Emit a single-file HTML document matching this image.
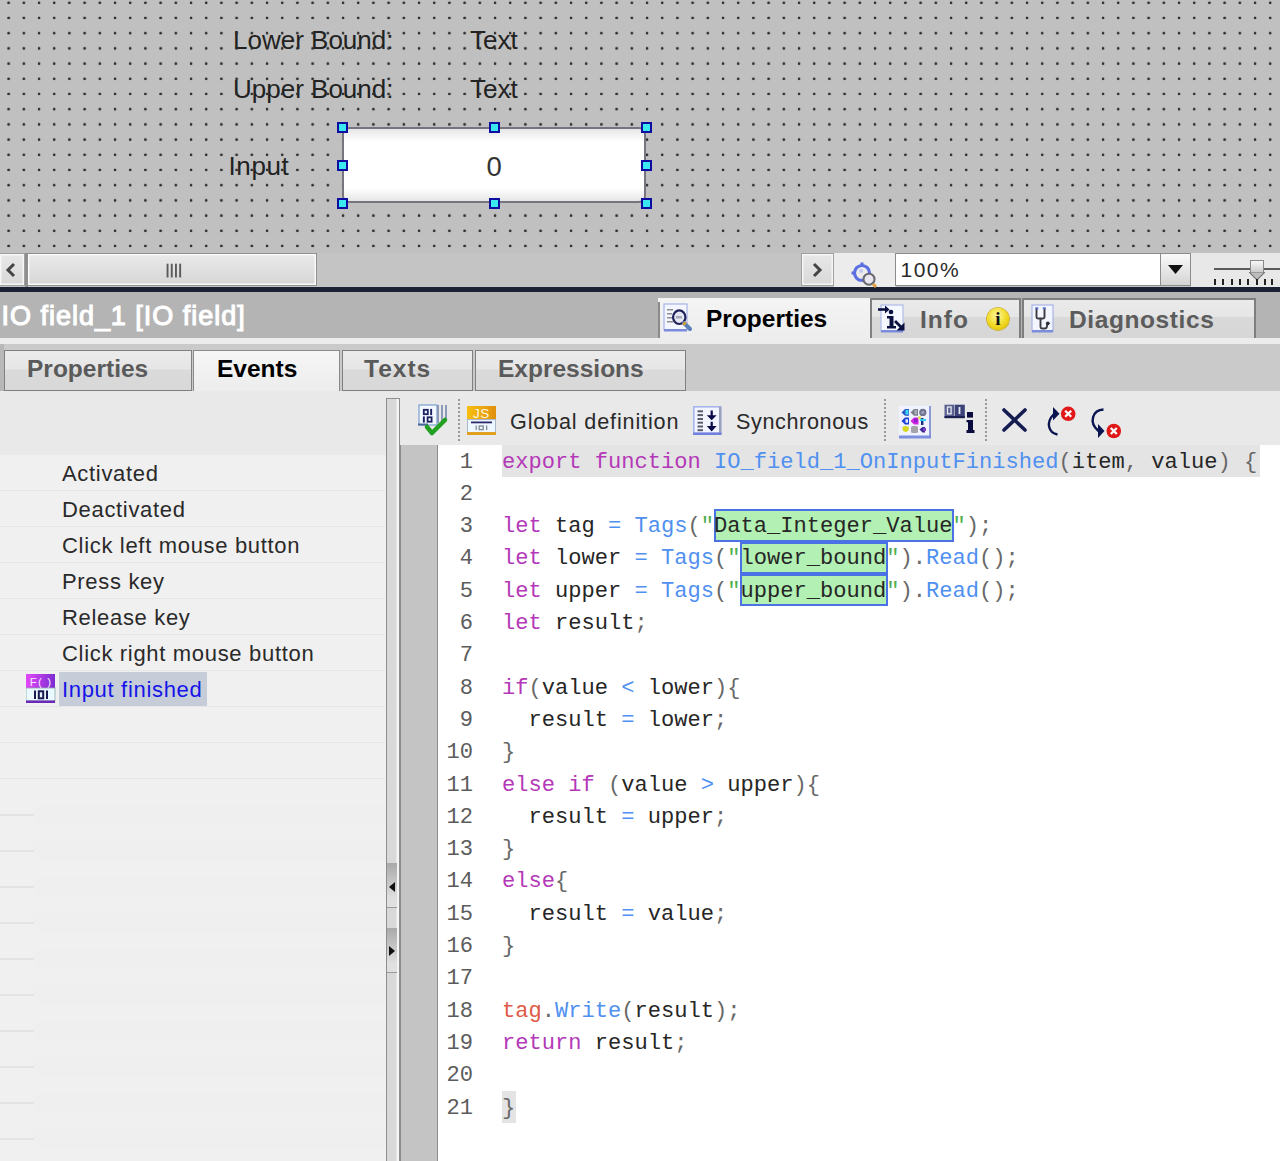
<!DOCTYPE html>
<html><head><meta charset="utf-8">
<style>
*{margin:0;padding:0;box-sizing:border-box}
html,body{width:1280px;height:1161px;overflow:hidden;background:#efefef;font-family:"Liberation Sans",sans-serif}
.a{position:absolute}
#canvas{left:0;top:0;width:1280px;height:253px;background-color:#c0c0c0;
}
.lbl{font-size:26px;color:#222;white-space:nowrap;line-height:1}
#dots2{left:0;top:0;width:1280px;height:253px;
}
.tb{font-size:24.5px;font-weight:bold;line-height:30px;white-space:nowrap}
.ev{font-size:22px;letter-spacing:0.68px;line-height:31px;color:#2a2a2a;white-space:nowrap}
.ln{left:439px;width:34px;text-align:right;font-family:"Liberation Mono",monospace;font-size:22.08px;line-height:32px;color:#5c5c5c}
.cl{left:502px;font-family:"Liberation Mono",monospace;font-size:22.08px;line-height:32px;color:#111;white-space:pre}
.k{color:#b438b8}.b{color:#5090f0}.p{color:#686868}.i{color:#262626}.g{color:#50b050}.r{color:#e05a48}
.hd{width:11px;height:11px;background:#3ae8f0;border:2px solid #0c0ca0}
.tt{font-size:21.6px;line-height:28px;color:#2a2a2a;white-space:nowrap}
</style></head><body>
<div id="canvas" class="a"><svg width="1280" height="253" style="position:absolute;left:0;top:0"><defs><pattern id="dp1" x="0" y="0" width="15.2" height="15.2" patternUnits="userSpaceOnUse"><rect x="7.55" y="1.75" width="2.1" height="2.1" fill="#303030"/></pattern></defs><rect width="1280" height="253" fill="url(#dp1)"/></svg></div>
<div class="a lbl" style="left:233px;top:27px">Lower Bound:</div>
<div class="a lbl" style="left:470px;top:27px">Text</div>
<div class="a lbl" style="left:233px;top:76px">Upper Bound:</div>
<div class="a lbl" style="left:470px;top:76px">Text</div>
<div class="a lbl" style="left:228.5px;top:152.5px;letter-spacing:0.6px">Input</div>
<div id="dots2" class="a"><svg width="1280" height="253" style="position:absolute;left:0;top:0"><defs><pattern id="dp2" x="0" y="0" width="15.2" height="15.2" patternUnits="userSpaceOnUse"><rect x="7.55" y="1.75" width="2.1" height="2.1" fill="#303030"/></pattern></defs><rect width="1280" height="253" fill="url(#dp2)"/></svg></div>
<!-- IO field -->
<div class="a" style="left:341.8px;top:126.9px;width:304.2px;height:76.2px;border:2.2px solid #77737f;border-radius:7px;background:linear-gradient(#e6e6e6,#fff 18%,#fff 82%,#e6e6e6)"></div>
<div class="a lbl" style="left:486.5px;top:152.5px;color:#333;font-size:27.5px">0</div>

<!-- scrollbar row -->
<div class="a" style="left:0;top:253px;width:1280px;height:34px;background:#c4c4c4"></div>
<div class="a" style="left:0;top:253px;width:25px;height:33px;background:linear-gradient(#e8e8e8,#d8d8d8);border:1px solid #a0a0a0;border-left:none;box-shadow:inset 0 0 0 1.5px #f6f6f6"></div>
<svg class="a" style="left:5px;top:262px" width="12" height="16" viewBox="0 0 12 16"><path d="M9 2 L3 8 L9 14" fill="none" stroke="#444" stroke-width="3"/></svg>
<div class="a" style="left:24.5px;top:252.5px;width:3px;height:34px;background:#8e8e8e"></div>
<div class="a" style="left:27px;top:253px;width:290px;height:33px;background:linear-gradient(#eaeaea,#d6d6d6);border:1px solid #909090;box-shadow:inset 0 0 0 1.5px #fafafa"></div>
<svg class="a" style="left:166px;top:263px" width="17" height="15" viewBox="0 0 17 15"><g fill="#5a5a5a"><rect x="0.6" y="0.7" width="1.9" height="13.8"/><rect x="4.8" y="0.7" width="1.9" height="13.8"/><rect x="9" y="0.7" width="1.9" height="13.8"/><rect x="13.2" y="0.7" width="1.9" height="13.8"/></g></svg>
<div class="a" style="left:801px;top:253px;width:33px;height:33px;background:linear-gradient(#e8e8e8,#d8d8d8);border:1px solid #a0a0a0;box-shadow:inset 0 0 0 1.5px #f6f6f6"></div>
<svg class="a" style="left:811px;top:262px" width="12" height="16" viewBox="0 0 12 16"><path d="M3 2 L9 8 L3 14" fill="none" stroke="#444" stroke-width="3"/></svg>
<div class="a" style="left:834px;top:253px;width:62px;height:34px;background:#ececec"></div>
<div class="a" style="left:895px;top:253px;width:265px;height:33px;background:#fff;border:1px solid #8c8c8c;border-right:none"></div>
<div class="a" style="left:900.5px;top:257.5px;font-size:21px;letter-spacing:1.5px;color:#2a2a2a;line-height:24px">100%</div>
<div class="a" style="left:1160px;top:253px;width:31px;height:33px;background:linear-gradient(#fafafa,#d4d4d4);border:1px solid #8c8c8c"></div>
<svg class="a" style="left:1168px;top:265px" width="15" height="9" viewBox="0 0 15 9"><path d="M0 0 H15 L7.5 9Z" fill="#111"/></svg>
<div class="a" style="left:1191px;top:253px;width:89px;height:34px;background:#e8e8e8"></div>
<!-- dark line -->
<div class="a" style="left:0;top:287px;width:1280px;height:5px;background:#1c2133"></div>
<!-- title bar -->
<div class="a" style="left:0;top:292px;width:1280px;height:46px;background:#b4b4b4"></div>
<div class="a" style="left:1.5px;top:300px;font-size:27px;letter-spacing:0.98px;-webkit-text-stroke:1.1px #fff;color:#fff;line-height:32px;white-space:nowrap">IO field_1 [IO field]</div>
<!-- light strip and subtab row -->
<div class="a" style="left:0;top:338px;width:1280px;height:6px;background:#ececec"></div>
<div class="a" style="left:0;top:344px;width:1280px;height:47.5px;background:#cacaca;border-bottom:1.8px solid #7a7a7a"></div>

<!-- right tabs -->
<div class="a" style="left:658px;top:298px;width:212px;height:46px;background:linear-gradient(#f4f4f4,#ececec)"></div><div class="a" style="left:658px;top:302px;width:2px;height:36px;background:#8a8a8a"></div>
<div class="a tb" style="left:706px;top:304px;color:#000">Properties</div>
<div class="a" style="left:869.5px;top:298px;width:151px;height:40px;background:linear-gradient(#eaeaea 0,#e6e6e6 44%,#d9d9d9 46%,#d6d6d6 100%);border:2px solid #7e7e7e;border-left:2.5px solid #808080;border-bottom:none"></div>
<div class="a tb" style="left:920px;top:305px;color:#5c5c5c;letter-spacing:1px">Info</div>
<div class="a" style="left:1022px;top:298px;width:234px;height:40px;background:linear-gradient(#eaeaea 0,#e6e6e6 44%,#d9d9d9 46%,#d6d6d6 100%);border:2px solid #7e7e7e;border-bottom:none"></div>
<div class="a tb" style="left:1069px;top:305px;color:#5c5c5c;letter-spacing:0.6px">Diagnostics</div>
<!-- sub tabs -->
<div class="a" style="left:0;top:344px;width:4px;height:47px;background:#b8b8b8"></div>
<div class="a" style="left:4px;top:350px;width:188px;height:41px;background:linear-gradient(#ebebeb 0,#e6e6e6 45%,#dadada 50%,#d8d8d8 100%);border:1.6px solid #808080"></div>
<div class="a tb" style="left:27px;top:354px;color:#5a5a5a">Properties</div>
<div class="a" style="left:193px;top:350px;width:147px;height:42px;background:linear-gradient(#f6f6f6,#ececec);border:1.5px solid #8a8a8a;border-bottom:none"></div>
<div class="a tb" style="left:217px;top:354px;color:#000">Events</div>
<div class="a" style="left:342px;top:350px;width:131px;height:41px;background:linear-gradient(#ebebeb 0,#e6e6e6 45%,#dadada 50%,#d8d8d8 100%);border:1.6px solid #808080"></div>
<div class="a tb" style="left:364px;top:354px;color:#5a5a5a;letter-spacing:1px">Texts</div>
<div class="a" style="left:475px;top:350px;width:211px;height:41px;background:linear-gradient(#ebebeb 0,#e6e6e6 45%,#dadada 50%,#d8d8d8 100%);border:1.6px solid #808080"></div>
<div class="a tb" style="left:498px;top:354px;color:#5a5a5a">Expressions</div>

<!-- events list -->
<div class="a" style="left:0;top:391px;width:386px;height:64px;background:#e9e9e9"></div>
<div class="a" style="left:0;top:455px;width:386px;height:706px;background:#f0f0f0"></div>
<div class="a" style="left:0;top:490px;width:385px;height:1px;background:#e6e6e6"></div>
<div class="a" style="left:0;top:526px;width:385px;height:1px;background:#e6e6e6"></div>
<div class="a" style="left:0;top:562px;width:385px;height:1px;background:#e6e6e6"></div>
<div class="a" style="left:0;top:598px;width:385px;height:1px;background:#e6e6e6"></div>
<div class="a" style="left:0;top:634px;width:385px;height:1px;background:#e6e6e6"></div>
<div class="a" style="left:0;top:670px;width:385px;height:1px;background:#e6e6e6"></div>
<div class="a" style="left:0;top:706px;width:385px;height:1px;background:#e6e6e6"></div>
<div class="a" style="left:0;top:742px;width:385px;height:1px;background:#e6e6e6"></div>
<div class="a" style="left:0;top:778px;width:385px;height:1px;background:#e6e6e6"></div>
<div class="a" style="left:0;top:814px;width:34px;height:1.5px;background:#e3e3e3"></div><div class="a" style="left:34px;top:805px;width:351px;height:20px;background:#eeeeee;opacity:0.6"></div>
<div class="a" style="left:0;top:850px;width:34px;height:1.5px;background:#e3e3e3"></div><div class="a" style="left:34px;top:841px;width:351px;height:20px;background:#eeeeee;opacity:0.6"></div>
<div class="a" style="left:0;top:886px;width:34px;height:1.5px;background:#e3e3e3"></div><div class="a" style="left:34px;top:877px;width:351px;height:20px;background:#eeeeee;opacity:0.6"></div>
<div class="a" style="left:0;top:922px;width:34px;height:1.5px;background:#e3e3e3"></div><div class="a" style="left:34px;top:913px;width:351px;height:20px;background:#eeeeee;opacity:0.6"></div>
<div class="a" style="left:0;top:958px;width:34px;height:1.5px;background:#e3e3e3"></div><div class="a" style="left:34px;top:949px;width:351px;height:20px;background:#eeeeee;opacity:0.6"></div>
<div class="a" style="left:0;top:994px;width:34px;height:1.5px;background:#e3e3e3"></div><div class="a" style="left:34px;top:985px;width:351px;height:20px;background:#eeeeee;opacity:0.6"></div>
<div class="a" style="left:0;top:1030px;width:34px;height:1.5px;background:#e3e3e3"></div><div class="a" style="left:34px;top:1021px;width:351px;height:20px;background:#eeeeee;opacity:0.6"></div>
<div class="a" style="left:0;top:1066px;width:34px;height:1.5px;background:#e3e3e3"></div><div class="a" style="left:34px;top:1057px;width:351px;height:20px;background:#eeeeee;opacity:0.6"></div>
<div class="a" style="left:0;top:1102px;width:34px;height:1.5px;background:#e3e3e3"></div><div class="a" style="left:34px;top:1093px;width:351px;height:20px;background:#eeeeee;opacity:0.6"></div>
<div class="a" style="left:0;top:1138px;width:34px;height:1.5px;background:#e3e3e3"></div><div class="a" style="left:34px;top:1129px;width:351px;height:20px;background:#eeeeee;opacity:0.6"></div>
<div class="a" style="left:0;top:1174px;width:34px;height:1.5px;background:#e3e3e3"></div><div class="a" style="left:34px;top:1165px;width:351px;height:20px;background:#eeeeee;opacity:0.6"></div>
<div class="a ev" style="left:62px;top:458px">Activated</div>
<div class="a ev" style="left:62px;top:494px">Deactivated</div>
<div class="a ev" style="left:62px;top:530px">Click left mouse button</div>
<div class="a ev" style="left:62px;top:566px">Press key</div>
<div class="a ev" style="left:62px;top:602px">Release key</div>
<div class="a ev" style="left:62px;top:638px">Click right mouse button</div>
<div class="a" style="left:59px;top:672px;width:148px;height:34px;background:#c6cdd9"></div>
<div class="a ev" style="left:62px;top:674px;color:#1515e8">Input finished</div>

<div class="a" style="left:386px;top:391px;width:894px;height:54px;background:#e9e9e9"></div>
<!-- splitter -->
<div class="a" style="left:385.5px;top:397.5px;width:14.5px;height:764px;background:#d8d8d8;border:1.5px solid #8e8e8e;border-bottom:none;box-shadow:inset -2.5px 0 0 #f4f4f4"></div>
<div class="a" style="left:387px;top:863px;width:10px;height:45px;background:linear-gradient(#a8a8a8,#e0e0e0 80%);border-bottom:1.5px solid #9a9a9a"></div>
<svg class="a" style="left:389px;top:881.5px" width="6" height="10" viewBox="0 0 6 10"><path d="M6 0 V10 L0 5Z" fill="#111"/></svg>
<div class="a" style="left:387px;top:928px;width:10px;height:45px;background:linear-gradient(#a8a8a8,#e0e0e0 80%);border-bottom:1.5px solid #9a9a9a"></div>
<svg class="a" style="left:389px;top:946px" width="6" height="10" viewBox="0 0 6 10"><path d="M0 0 V10 L6 5Z" fill="#111"/></svg>
<!-- toolbar -->
<!-- code editor -->
<div class="a" style="left:400px;top:445px;width:38px;height:716px;background:#c4c4c4;border-left:1.5px solid #8c8c8c;border-right:1.5px solid #8c8c8c"></div>
<div class="a" style="left:438px;top:445px;width:842px;height:716px;background:#fff"></div>

<!-- code highlights -->
<div class="a" style="left:502px;top:445px;width:758px;height:32px;background:#e4e4e4"></div>
<div class="a" style="left:502px;top:1091px;width:13.5px;height:32px;background:#e4e4e4"></div>
<div class="a" style="left:713.5px;top:509px;width:240.5px;height:32.5px;background:#b3f0b3;border:2px solid #4a72e4"></div>
<div class="a" style="left:740px;top:541.5px;width:148px;height:32.5px;background:#b3f0b3;border:2px solid #4a72e4"></div>
<div class="a" style="left:740px;top:573.5px;width:148px;height:32.5px;background:#b3f0b3;border:2px solid #4a72e4"></div>
<div class="a ln" style="top:446.50px">1</div><div class="a cl" style="top:446.50px"><span class="k">export</span> <span class="k">function</span> <span class="b">IO_field_1_OnInputFinished</span><span class="p">(</span><span class="i">item</span><span class="p">, </span><span class="i">value</span><span class="p">) {</span></div>
<div class="a ln" style="top:478.80px">2</div><div class="a cl" style="top:478.80px"></div>
<div class="a ln" style="top:511.10px">3</div><div class="a cl" style="top:511.10px"><span class="k">let</span> <span class="i">tag</span> <span class="b">=</span> <span class="b">Tags</span><span class="p">(</span><span class="g">"</span><span class="i">Data_Integer_Value</span><span class="g">"</span><span class="p">);</span></div>
<div class="a ln" style="top:543.40px">4</div><div class="a cl" style="top:543.40px"><span class="k">let</span> <span class="i">lower</span> <span class="b">=</span> <span class="b">Tags</span><span class="p">(</span><span class="g">"</span><span class="i">lower_bound</span><span class="g">"</span><span class="p">).</span><span class="b">Read</span><span class="p">();</span></div>
<div class="a ln" style="top:575.70px">5</div><div class="a cl" style="top:575.70px"><span class="k">let</span> <span class="i">upper</span> <span class="b">=</span> <span class="b">Tags</span><span class="p">(</span><span class="g">"</span><span class="i">upper_bound</span><span class="g">"</span><span class="p">).</span><span class="b">Read</span><span class="p">();</span></div>
<div class="a ln" style="top:608.00px">6</div><div class="a cl" style="top:608.00px"><span class="k">let</span> <span class="i">result</span><span class="p">;</span></div>
<div class="a ln" style="top:640.30px">7</div><div class="a cl" style="top:640.30px"></div>
<div class="a ln" style="top:672.60px">8</div><div class="a cl" style="top:672.60px"><span class="k">if</span><span class="p">(</span><span class="i">value</span> <span class="b">&lt;</span> <span class="i">lower</span><span class="p">){</span></div>
<div class="a ln" style="top:704.90px">9</div><div class="a cl" style="top:704.90px">  <span class="i">result</span> <span class="b">=</span> <span class="i">lower</span><span class="p">;</span></div>
<div class="a ln" style="top:737.20px">10</div><div class="a cl" style="top:737.20px"><span class="p">}</span></div>
<div class="a ln" style="top:769.50px">11</div><div class="a cl" style="top:769.50px"><span class="k">else</span> <span class="k">if</span> <span class="p">(</span><span class="i">value</span> <span class="b">&gt;</span> <span class="i">upper</span><span class="p">){</span></div>
<div class="a ln" style="top:801.80px">12</div><div class="a cl" style="top:801.80px">  <span class="i">result</span> <span class="b">=</span> <span class="i">upper</span><span class="p">;</span></div>
<div class="a ln" style="top:834.10px">13</div><div class="a cl" style="top:834.10px"><span class="p">}</span></div>
<div class="a ln" style="top:866.40px">14</div><div class="a cl" style="top:866.40px"><span class="k">else</span><span class="p">{</span></div>
<div class="a ln" style="top:898.70px">15</div><div class="a cl" style="top:898.70px">  <span class="i">result</span> <span class="b">=</span> <span class="i">value</span><span class="p">;</span></div>
<div class="a ln" style="top:931.00px">16</div><div class="a cl" style="top:931.00px"><span class="p">}</span></div>
<div class="a ln" style="top:963.30px">17</div><div class="a cl" style="top:963.30px"></div>
<div class="a ln" style="top:995.60px">18</div><div class="a cl" style="top:995.60px"><span class="r">tag</span><span class="p">.</span><span class="b">Write</span><span class="p">(</span><span class="i">result</span><span class="p">);</span></div>
<div class="a ln" style="top:1027.90px">19</div><div class="a cl" style="top:1027.90px"><span class="k">return</span> <span class="i">result</span><span class="p">;</span></div>
<div class="a ln" style="top:1060.20px">20</div><div class="a cl" style="top:1060.20px"></div>
<div class="a ln" style="top:1092.50px">21</div><div class="a cl" style="top:1092.50px"><span class="p">}</span></div>

<!-- handles -->
<div class="a hd" style="left:336.5px;top:122.0px"></div><div class="a hd" style="left:336.5px;top:160.0px"></div><div class="a hd" style="left:336.5px;top:197.5px"></div><div class="a hd" style="left:488.5px;top:122.0px"></div><div class="a hd" style="left:488.5px;top:197.5px"></div><div class="a hd" style="left:640.5px;top:122.0px"></div><div class="a hd" style="left:640.5px;top:160.0px"></div><div class="a hd" style="left:640.5px;top:197.5px"></div>
<!-- toolbar contents -->
<svg class="a" style="left:417px;top:403px" width="32" height="34" viewBox="0 0 32 34">
 <rect x="2" y="2" width="18" height="20" fill="#f4f8ff" stroke="#7aa0d0" stroke-width="1.2"/>
 <rect x="20" y="2" width="2" height="18" fill="#8a9ab8"/><rect x="24" y="2" width="2" height="16" fill="#8a9ab8"/><rect x="28" y="2" width="2" height="14" fill="#8a9ab8"/>
 <rect x="1" y="20.5" width="10" height="2" fill="#4a6a9a"/>
 <rect x="6.8" y="6.8" width="4" height="4.4" fill="none" stroke="#1a2060" stroke-width="1.8"/><rect x="13.2" y="5.9" width="1.9" height="6.2" fill="#1a2060"/>
 <rect x="5.9" y="13.4" width="1.9" height="6.2" fill="#1a2060"/><rect x="10.6" y="14.3" width="4" height="4.4" fill="none" stroke="#1a2060" stroke-width="1.8"/>
 <path d="M10 24 L15 30 L28 17" fill="none" stroke="#22a022" stroke-width="4.5" stroke-linecap="round" stroke-linejoin="round"/>
</svg>
<div class="a" style="left:458px;top:399px;width:1.6px;height:44px;background:repeating-linear-gradient(#9a9a9a 0 2px,transparent 2px 4px)"></div>
<svg class="a" style="left:467px;top:406px" width="30" height="30" viewBox="0 0 30 30">
 <defs><linearGradient id="jg" x1="0" x2="1"><stop offset="0" stop-color="#f8c010"/><stop offset="1" stop-color="#e09010"/></linearGradient></defs>
 <rect x="0" y="0" width="29" height="13.5" fill="url(#jg)"/>
 <rect x="0.5" y="13.5" width="28" height="13" fill="#eef6ff" stroke="#a8b8c8" stroke-width="1"/>
 <rect x="0" y="26" width="29" height="3" fill="#e0a020"/>
 <text x="14.5" y="11.8" font-family="Liberation Sans" font-size="13.5" fill="#fff8e0" text-anchor="middle" letter-spacing="0.5">JS</text>
 <rect x="4" y="15.5" width="21" height="1.8" fill="#2a2a6a"/>
 <rect x="8.5" y="19.5" width="1.3" height="4.5" fill="#808890"/><rect x="12.2" y="20" width="4" height="3.6" fill="none" stroke="#808890" stroke-width="1.3"/><rect x="19" y="19.5" width="1.3" height="4.5" fill="#808890"/>
</svg>
<div class="a tt" style="left:510px;top:407.5px;letter-spacing:0.85px">Global definition</div>
<svg class="a" style="left:693px;top:406px" width="30" height="30" viewBox="0 0 30 30">
 <rect x="0.8" y="0.8" width="27" height="26.5" fill="#f2f4ff" stroke="#a8b4ec" stroke-width="1.6"/>
 <rect x="26" y="1" width="2.2" height="26" fill="#9aa0b8"/>
 <rect x="0" y="26.5" width="28.5" height="2.5" fill="#7080dc"/>
 <g fill="#5a5e6a"><rect x="4.5" y="4.3" width="5.5" height="2"/><rect x="4.5" y="8.1" width="5.5" height="2"/><rect x="4.5" y="12" width="5.5" height="2"/><rect x="4.5" y="15.7" width="5.5" height="2"/><rect x="4.5" y="19.5" width="5.5" height="2"/><rect x="4.5" y="23.2" width="5.5" height="2"/></g>
 <g fill="#0a0a48"><rect x="17.6" y="4.5" width="2.2" height="6"/><path d="M13.8 9.2 H23.6 L18.7 14.3Z"/><rect x="17.6" y="15.8" width="2.2" height="5"/><path d="M13.8 20 H23.6 L18.7 25.5Z"/></g>
</svg>
<div class="a tt" style="left:736px;top:407.5px;letter-spacing:0.62px">Synchronous</div>
<div class="a" style="left:884px;top:399px;width:1.6px;height:44px;background:repeating-linear-gradient(#9a9a9a 0 2px,transparent 2px 4px)"></div>
<svg class="a" style="left:899px;top:406px" width="33" height="33" viewBox="0 0 33 33">
 <rect x="0" y="0" width="31" height="30" fill="#f0f2ff"/>
 <rect x="30" y="0" width="2" height="32" fill="#8c98d8"/>
 <rect x="0" y="29.5" width="32" height="3" fill="#7c8ee0"/>
 <path d="M2.5 6.4 L6 3 H10 V9.8 H6Z" fill="#2858c8"/><rect x="6.5" y="4" width="3" height="4.5" fill="#40d8f0"/>
 <path d="M11.5 6.4 L15 3 H19 V9.8 H15Z" fill="#7a7e88"/><rect x="15.5" y="4" width="2.5" height="4.5" fill="#a8acb8"/>
 <circle cx="23.8" cy="6.4" r="3.6" fill="#70748c"/><circle cx="23.8" cy="6.4" r="1.6" fill="#9aa0c0"/>
 <path d="M2.5 15 L6 11.6 H10 V18.4 H6Z" fill="#1c40d8"/><rect x="6.5" y="13.3" width="2.5" height="3.4" fill="#e8f0ff"/>
 <path d="M11.5 15 L15 11.6 H19.5 V18.4 H15Z" fill="#d820e8"/><rect x="15" y="12.5" width="3.5" height="4" fill="#9020c8"/>
 <circle cx="20.5" cy="11.8" r="1.8" fill="#e0e060"/>
 <rect x="22" y="12" width="2.4" height="7" fill="#1a2a80"/><rect x="21" y="13" width="6" height="2" fill="#30d0f0"/>
 <path d="M3.5 21 Q6.6 19 9.8 21 V24 Q6.6 28 3.5 24Z" fill="#d8d820"/>
 <rect x="12" y="20" width="7" height="7" rx="1.5" fill="#a4a4a8"/>
 <path d="M20.5 23.6 L23.5 21 H26 V26.5 H23.5Z" fill="#3a2890"/><rect x="24" y="22" width="3" height="3" fill="#8040d0"/>
</svg>
<svg class="a" style="left:944px;top:404px" width="32" height="31" viewBox="0 0 32 31">
 <rect x="0.5" y="0.7" width="9.8" height="13.3" fill="#5a6090"/><rect x="10.8" y="0.7" width="10" height="13.3" fill="#3a4278"/>
 <rect x="0.5" y="12" width="20.3" height="2.2" fill="#1a2050"/>
 <rect x="3.5" y="3" width="3.6" height="6.8" fill="none" stroke="#e8eaf4" stroke-width="1.3"/><rect x="14.6" y="3" width="1.8" height="7" fill="#e8eaf4"/>
 <rect x="23" y="8" width="6" height="5.6" fill="#0a0c40"/>
 <path d="M22.5 16 H29 V26 H30.5 V29 H22.5 V26 H24 V18.3 H22.5Z" fill="#0a0c40"/>
</svg>
<div class="a" style="left:985px;top:399px;width:1.6px;height:44px;background:repeating-linear-gradient(#9a9a9a 0 2px,transparent 2px 4px)"></div>
<svg class="a" style="left:1002px;top:408px" width="25" height="24" viewBox="0 0 25 24"><path d="M2 2 L23 22 M23 2 L2 22" stroke="#141c50" stroke-width="3.6" stroke-linecap="round"/></svg>
<svg class="a" style="left:1044px;top:405px" width="33" height="31" viewBox="0 0 33 31">
 <path d="M13.5 29.5 C5 28 1 18 10 9" fill="none" stroke="#0a1450" stroke-width="2.4"/>
 <path d="M9 2 L15.5 8.8 L9 15.5Z" fill="#0a1450"/>
 <circle cx="24.2" cy="8.8" r="7.3" fill="#e01818"/><path d="M21.2 5.8 L27.2 11.8 M27.2 5.8 L21.2 11.8" stroke="#fff" stroke-width="2.3"/>
</svg>
<svg class="a" style="left:1089px;top:408px" width="34" height="32" viewBox="0 0 34 32">
 <path d="M14.5 1.5 C4 2 -1 14 9.5 23" fill="none" stroke="#0a1450" stroke-width="2.4"/>
 <path d="M9 16 L15.5 23 L9 30Z" fill="#0a1450"/>
 <circle cx="24.8" cy="23" r="7.3" fill="#e01818"/><path d="M21.8 20 L27.8 26 M27.8 20 L21.8 26" stroke="#fff" stroke-width="2.3"/>
</svg>

<!-- zoom icon -->
<svg class="a" style="left:850px;top:260px" width="32" height="28" viewBox="0 0 32 28">
 <circle cx="12" cy="13" r="7.5" fill="none" stroke="#5c70e4" stroke-width="3.2"/>
 <rect x="10.5" y="2.5" width="3" height="4" fill="#5a6ee0"/><rect x="1.5" y="11.5" width="4" height="3" fill="#5a6ee0"/>
 <circle cx="11" cy="11" r="2" fill="#c0c8f0"/>
 <circle cx="19" cy="19.2" r="5.5" fill="#e8e8ee" stroke="#6a6a72" stroke-width="2.1"/>
 <path d="M23 24 L26 27" stroke="#e0a040" stroke-width="3"/>
</svg>
<!-- slider -->
<div class="a" style="left:1214px;top:267.5px;width:66px;height:2.5px;background:#5a5a5a"></div>
<div class="a" style="left:1250px;top:260px;width:14px;height:13px;background:linear-gradient(#f8f8f8,#c8c8c8);border:1.5px solid #888;border-bottom:none"></div>
<svg class="a" style="left:1249px;top:272px" width="16" height="8" viewBox="0 0 16 8"><path d="M0 0 H16 L8 8Z" fill="#bdbdbd" stroke="#777" stroke-width="1.2"/></svg>
<div class="a" style="left:1213.5px;top:279px;width:2px;height:6px;background:#222"></div><div class="a" style="left:1221.6px;top:279px;width:2px;height:6px;background:#222"></div><div class="a" style="left:1231.1px;top:279px;width:2px;height:6px;background:#222"></div><div class="a" style="left:1238.8px;top:279px;width:2px;height:6px;background:#222"></div><div class="a" style="left:1246.6px;top:279px;width:2px;height:6px;background:#222"></div><div class="a" style="left:1256.1px;top:279px;width:2px;height:6px;background:#222"></div><div class="a" style="left:1263.8px;top:279px;width:2px;height:6px;background:#222"></div><div class="a" style="left:1271.3px;top:279px;width:2px;height:6px;background:#222"></div>
<!-- tab icons -->
<svg class="a" style="left:663px;top:303px" width="30" height="31" viewBox="0 0 30 31">
 <rect x="1" y="1" width="23" height="26" fill="#f4f6ff" stroke="#a8b4e8" stroke-width="1.2"/>
 <rect x="1" y="26" width="23" height="2.5" fill="#7c8cdc"/>
 <g fill="#909090"><rect x="4" y="6" width="6" height="1.5"/><rect x="4" y="10" width="5" height="1.5"/><rect x="4" y="14" width="5" height="1.5"/><rect x="4" y="18" width="6" height="1.5"/></g>
 <ellipse cx="16.25" cy="14.2" rx="6.2" ry="6.8" fill="#e6e8f4" stroke="#22225a" stroke-width="2.2"/>
 <rect x="13" y="13" width="6" height="2.5" fill="#a8a8b8"/>
 <path d="M21 20 L27 26" stroke="#5a80b8" stroke-width="4" stroke-linecap="round"/>
 <path d="M20.5 19.5 L22.5 21.5" stroke="#d0a030" stroke-width="3.5"/>
</svg>
<svg class="a" style="left:877px;top:304px" width="31" height="30" viewBox="0 0 31 30">
 <rect x="4" y="1" width="22" height="26" fill="#f6f8ff" stroke="#b0bcec" stroke-width="1.2"/>
 <rect x="4" y="26" width="22" height="2.5" fill="#7c8cdc"/>
 <path d="M1 5.5 H9" stroke="#0a1040" stroke-width="2.6"/><path d="M8 1.5 L12.5 5.5 L8 9.5Z" fill="#0a1040"/>
 <circle cx="14" cy="8" r="2.3" fill="#0a1040"/>
 <path d="M10 12 H16.5 V22 H19 V24.5 H10 V22 H12.5 V14.5 H10Z" fill="#0a1040"/>
 <path d="M18 17 L25 24" stroke="#0a1040" stroke-width="2.8"/><path d="M27.5 26.5 L27.5 18.5 L19.5 26.5Z" fill="#0a1040"/>
</svg>
<div class="a" style="left:987px;top:308px;width:22px;height:22px;border-radius:50%;background:radial-gradient(circle at 45% 35%,#fff8a0,#f0d820 55%,#d8b000);box-shadow:0 0 0 0.8px #c8a800"></div>
<div class="a" style="left:987px;top:308px;width:22px;height:22px;text-align:center;font:bold 19px/22px 'Liberation Serif',serif;color:#111">i</div>
<svg class="a" style="left:1031px;top:304px" width="23" height="30" viewBox="0 0 23 30">
 <rect x="1" y="1" width="21" height="26" fill="#f4f6ff" stroke="#a8b4e8" stroke-width="1.2"/>
 <rect x="1" y="26" width="21" height="2.5" fill="#7c8cdc"/>
 <path d="M5.5 4.5 V13 Q5.5 14.5 7 14.5 H12 Q13.5 14.5 13.5 13 V4.5" fill="none" stroke="#3a3a40" stroke-width="1.9"/>
 <path d="M9.5 14.5 V23 Q9.5 24.5 11 24.5 H14 Q15.5 24.5 15.8 23 L16.5 19.5" fill="none" stroke="#3a3a40" stroke-width="1.9"/>
 <circle cx="16.8" cy="19.3" r="1.9" fill="#2a3038"/>
 <rect x="4.3" y="3.3" width="3" height="2" fill="#5a70c8"/><rect x="11.8" y="3.3" width="3" height="2" fill="#5a70c8"/>
</svg>
<!-- selected event icon -->
<svg class="a" style="left:26px;top:674px" width="30" height="30" viewBox="0 0 30 30">
 <defs><linearGradient id="pg" x1="0" x2="1"><stop offset="0" stop-color="#e448f8"/><stop offset="1" stop-color="#7a2cd0"/></linearGradient></defs>
 <rect x="0" y="0" width="29" height="14" fill="url(#pg)"/>
 <rect x="0" y="14" width="29" height="13" fill="#eaf8ff" stroke="#8aa" stroke-width="0.8"/>
 <rect x="0" y="26.5" width="29" height="2.5" fill="#6a28b8"/>
 <text x="15" y="11.5" font-family="Liberation Sans" font-size="11.5" fill="#f4e4ff" text-anchor="middle" letter-spacing="1.2">F( )</text>
 <rect x="8" y="16.5" width="2" height="8.5" fill="#1a1a50"/><rect x="12.8" y="17.3" width="4.4" height="7" fill="none" stroke="#1a1a50" stroke-width="2"/><rect x="20" y="16.5" width="2" height="8.5" fill="#1a1a50"/>
</svg>
</body></html>
